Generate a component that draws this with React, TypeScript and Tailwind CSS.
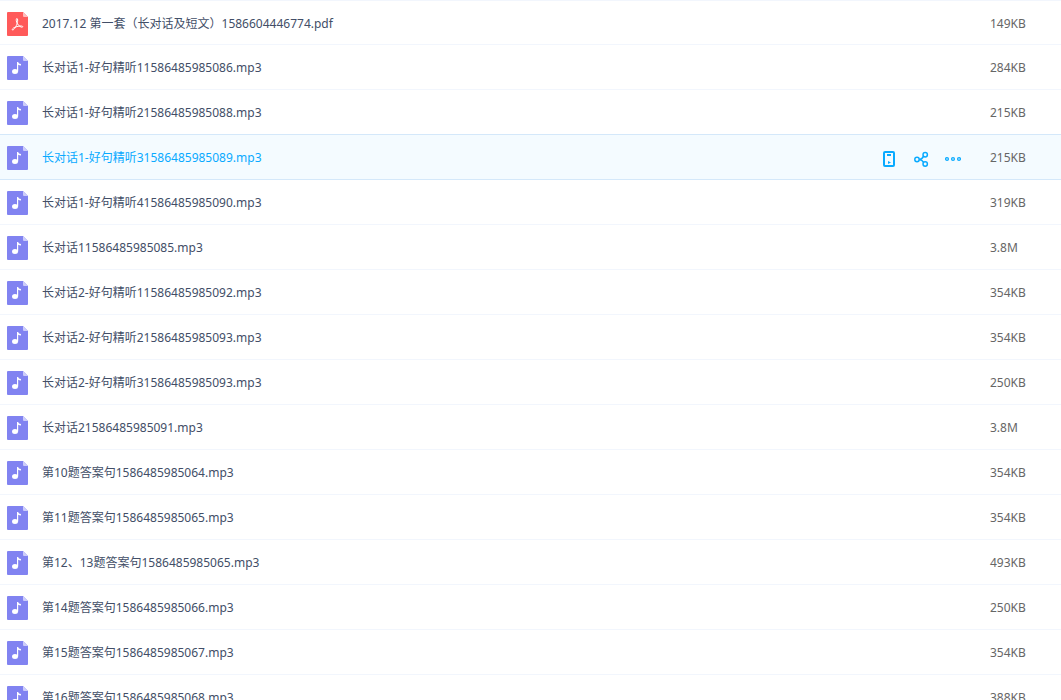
import React from "react";
import clsx from "clsx";

type FileRow = {
    name: string;
    size: string;
    type: "pdf" | "mp3";
    active?: boolean;
};

const files: FileRow[] = [
    { name: "2017.12 第一套（长对话及短文）1586604446774.pdf", size: "149KB", type: "pdf" },
    { name: "长对话1-好句精听11586485985086.mp3", size: "284KB", type: "mp3" },
    { name: "长对话1-好句精听21586485985088.mp3", size: "215KB", type: "mp3" },
    { name: "长对话1-好句精听31586485985089.mp3", size: "215KB", type: "mp3", active: true },
    { name: "长对话1-好句精听41586485985090.mp3", size: "319KB", type: "mp3" },
    { name: "长对话11586485985085.mp3", size: "3.8M", type: "mp3" },
    { name: "长对话2-好句精听11586485985092.mp3", size: "354KB", type: "mp3" },
    { name: "长对话2-好句精听21586485985093.mp3", size: "354KB", type: "mp3" },
    { name: "长对话2-好句精听31586485985093.mp3", size: "250KB", type: "mp3" },
    { name: "长对话21586485985091.mp3", size: "3.8M", type: "mp3" },
    { name: "第10题答案句1586485985064.mp3", size: "354KB", type: "mp3" },
    { name: "第11题答案句1586485985065.mp3", size: "354KB", type: "mp3" },
    { name: "第12、13题答案句1586485985065.mp3", size: "493KB", type: "mp3" },
    { name: "第14题答案句1586485985066.mp3", size: "250KB", type: "mp3" },
    { name: "第15题答案句1586485985067.mp3", size: "354KB", type: "mp3" },
    { name: "第16题答案句1586485985068.mp3", size: "388KB", type: "mp3" },
];

const PdfIcon = () => (
    <svg width="21" height="24" viewBox="0 0 21 24" className="shrink-0" aria-hidden="true">
        <path d="M1 0H16L21 5V23a1 1 0 0 1-1 1H1a1 1 0 0 1-1-1V1a1 1 0 0 1 1-1Z" fill="#ff5a5a" />
        <path d="M16 0L21 5H17a1 1 0 0 1-1-1Z" fill="#ffbdbd" />
        <path
            d="M9.8 6.5C10.8 6.3 10.9 8.8 10.3 11C9.4 14 7.2 17.8 5.8 18C4.6 18.1 5.4 16.4 7.2 15.6C9.5 14.5 12.6 13.8 14.6 14C16.4 14.2 16 15.5 14.6 15.2C12.6 14.8 10.4 12.4 9.6 10C9.1 8.4 9.1 6.7 9.8 6.5Z"
            fill="none"
            stroke="#fff"
            strokeWidth="1"
        />
    </svg>
);

const MusicIcon = () => (
    <svg width="21" height="24" viewBox="0 0 21 24" className="shrink-0" aria-hidden="true">
        <path d="M1 0H16L21 5V23a1 1 0 0 1-1 1H1a1 1 0 0 1-1-1V1a1 1 0 0 1 1-1Z" fill="#8183f1" />
        <path d="M16 0L21 5H17a1 1 0 0 1-1-1Z" fill="#cdcdfa" />
        <ellipse cx="8" cy="15.5" rx="3" ry="2.5" fill="#fff" />
        <path d="M10 6H11.2C11.4 7.4 12.4 7.8 14 8V9.4C12.8 9.4 11.8 9.2 11.2 8.8V15.5H10Z" fill="#fff" />
    </svg>
);

const PhoneIcon = () => (
    <svg width="16" height="16" viewBox="0 0 16 16" fill="none" stroke="currentColor" strokeWidth="2" aria-hidden="true">
        <rect x="3" y="1" width="10" height="14" rx="1" />
        <path d="M6 4H10" />
        <path d="M7 10V13L10 11.5Z" fill="currentColor" stroke="none" />
    </svg>
);

const ShareIcon = () => (
    <svg width="16" height="16" viewBox="0 0 16 16" fill="none" stroke="currentColor" strokeWidth="1.5" aria-hidden="true">
        <circle cx="4" cy="8.5" r="2.2" />
        <circle cx="12.2" cy="3.8" r="2.2" />
        <circle cx="12.2" cy="13" r="2.2" />
        <path d="M6.2 8.5C8.4 8.3 9.6 7.2 10.4 5.4M6.2 8.5C8.4 8.7 9.6 9.6 10.6 11.4" />
    </svg>
);

const MoreIcon = () => (
    <svg width="16" height="16" viewBox="0 0 16 16" fill="none" stroke="currentColor" strokeWidth="1.3" aria-hidden="true">
        <circle cx="2" cy="8" r="1.4" />
        <circle cx="8" cy="8" r="1.4" />
        <circle cx="14" cy="8" r="1.4" />
    </svg>
);

const RowActions = () => (
    <div className="flex items-center gap-4 pt-0.5 text-[#09aaff]">
        <button type="button" aria-label="发送到手机"><PhoneIcon /></button>
        <button type="button" aria-label="分享"><ShareIcon /></button>
        <button type="button" aria-label="更多"><MoreIcon /></button>
    </div>
);

const App = () => {
    return (
        <main className="h-screen overflow-hidden bg-white font-['Noto_Sans','Noto_Sans_CJK_SC',sans-serif] text-xs">
            <table className="w-full border-collapse">
                <tbody>
                    {files.map((file) => {
                        // double wins over solid where collapsed borders meet
                        const border = file.active ? "border-[#d4e8fa] border-double" : "border-[#f2f6fd]";
                        return (
                            <tr
                                key={file.name}
                                className={clsx("h-[45px] first:h-11", file.active ? "bg-[#f4fbff]" : "bg-white")}
                            >
                                <td className={clsx("border-y p-0 pt-0.5 pl-[7px]", border)}>
                                    <div className="flex items-center gap-3.5">
                                        {file.type === "pdf" ? <PdfIcon /> : <MusicIcon />}
                                        <a href="#" className={file.active ? "text-[#09aaff]" : "text-[#424e67]"}>
                                            {file.name}
                                        </a>
                                    </div>
                                </td>
                                <td className={clsx("w-[109px] border-y p-0 pt-0.5", border)}>
                                    {file.active && <RowActions />}
                                </td>
                                <td className={clsx("w-[71px] border-y p-0 pt-0.5 text-[#666]", border)}>
                                    {file.size}
                                </td>
                            </tr>
                        );
                    })}
                </tbody>
            </table>
        </main>
    );
};

export default App;
